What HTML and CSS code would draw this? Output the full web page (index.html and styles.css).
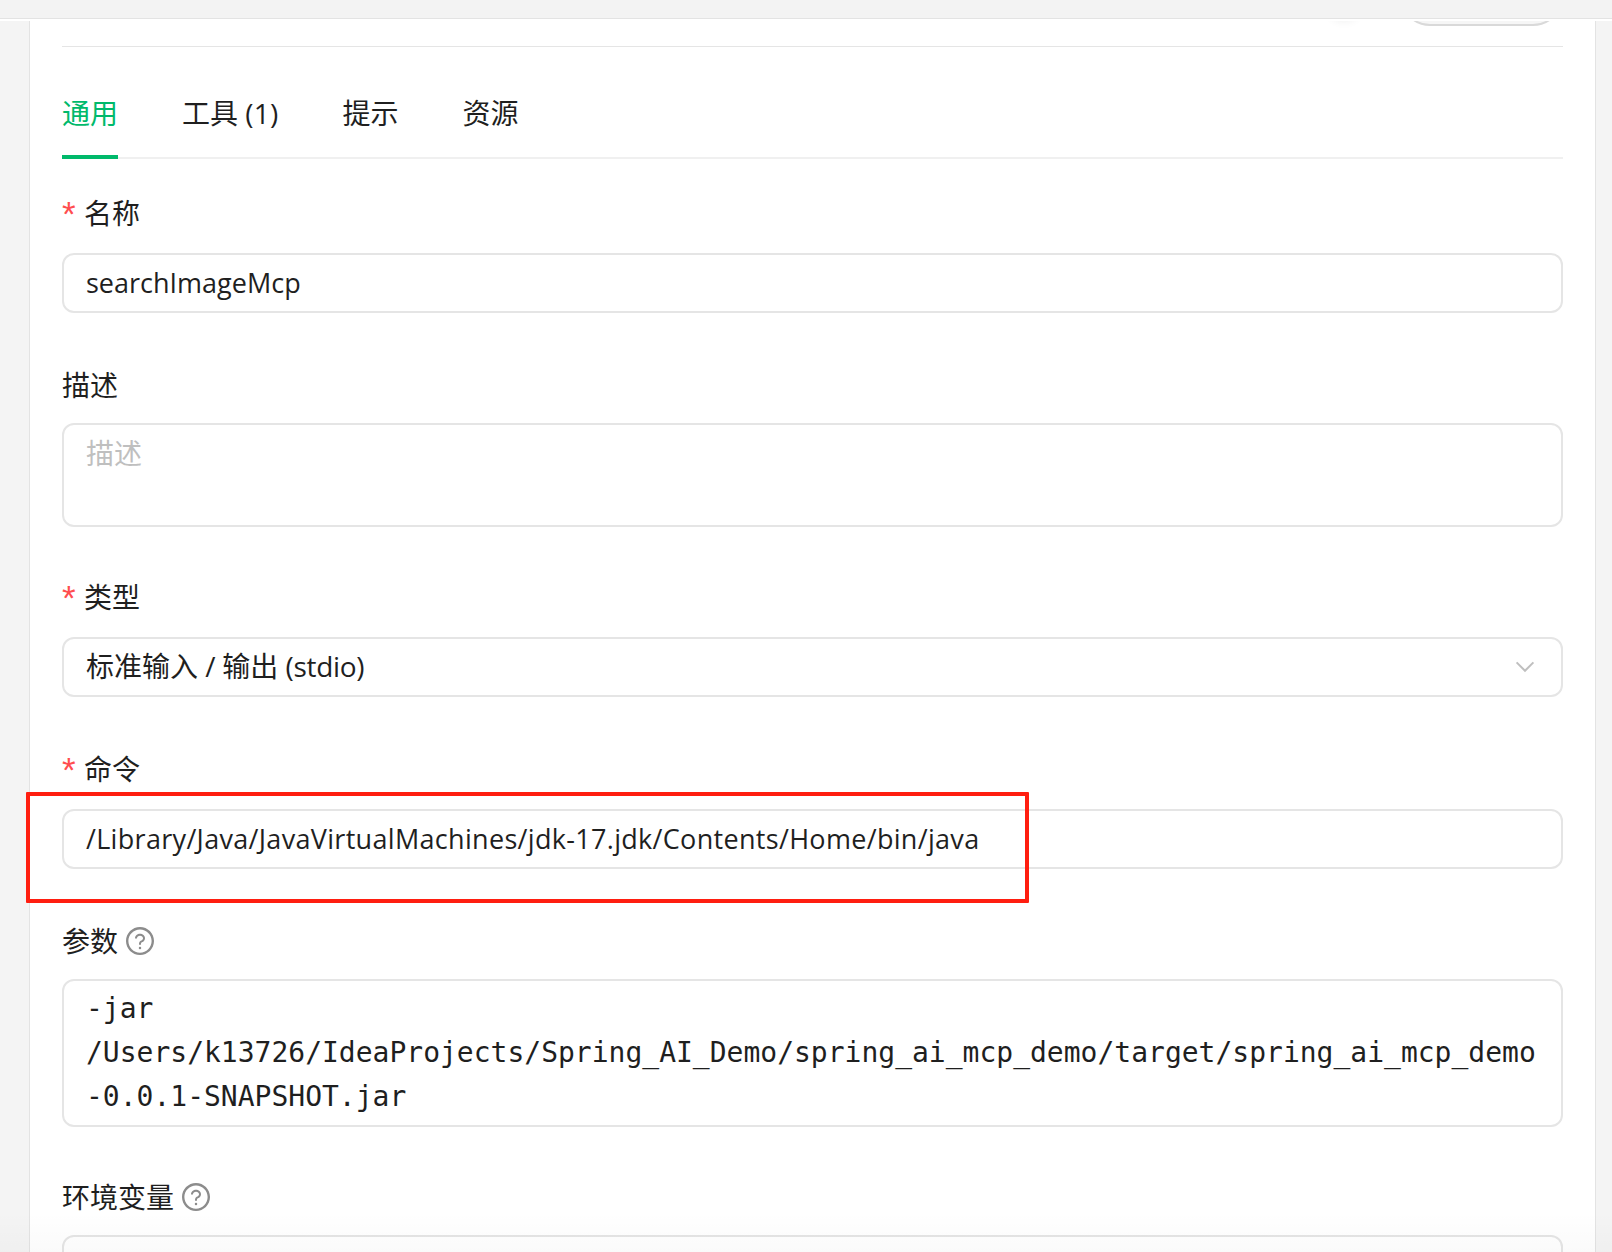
FILE: index.html
```html
<!DOCTYPE html>
<html lang="zh-CN">
<head>
    <meta charset="UTF-8">
    <meta name="viewport" content="width=device-width, initial-scale=1.0">
    <title>MCP 服务器</title>
    <link rel="stylesheet" href="styles.css">
</head>
<body>
    <div class="topbar"></div>
    <div class="page">
        <div class="card">
            <div class="card-header">
                <span class="switch"></span>
                <button class="save-btn" type="button"></button>
            </div>

            <div class="tabs">
                <div class="tab active">通用</div>
                <div class="tab">工具 <span class="count">(1)</span></div>
                <div class="tab">提示</div>
                <div class="tab">资源</div>
            </div>

            <div class="field">
                <div class="label"><span class="required">*</span>名称</div>
                <div class="control">
                    <div class="input"><span class="name-value">searchImageMcp</span></div>
                </div>
            </div>

            <div class="field">
                <div class="label">描述</div>
                <div class="textarea rows-2 placeholder">描述</div>
            </div>

            <div class="field">
                <div class="label"><span class="required">*</span>类型</div>
                <div class="control">
                    <div class="input select">
                        <span>标准输入 <span class="latin">/ </span>输出 <span class="latin">(stdio)</span></span>
                        <svg class="arrow" width="20" height="12" viewBox="0 0 20 12"><path d="M1.6 1.4 10 9.8l8.4-8.4" fill="none" stroke="#bfbfbf" stroke-width="2"/></svg>
                    </div>
                </div>
            </div>

            <div class="field marked">
                <div class="label"><span class="required">*</span>命令</div>
                <div class="control">
                    <div class="input"><span class="command-value">/Library/Java/JavaVirtualMachines/jdk-17.jdk/Contents/Home/bin/java</span></div>
                </div>
                <div class="mark"></div>
            </div>

            <div class="field">
                <div class="label">参数
                    <svg class="help" viewBox="64 64 896 896"><path d="M512 64C264.6 64 64 264.6 64 512s200.6 448 448 448 448-200.6 448-448S759.4 64 512 64zm0 820c-205.4 0-372-166.6-372-372s166.6-372 372-372 372 166.6 372 372-166.6 372-372 372z"/><path d="M623.6 316.7C593.6 290.4 554 276 512 276s-81.6 14.5-111.6 40.7C369.2 344 352 380.7 352 420v7.6c0 4.4 3.6 8 8 8h48c4.4 0 8-3.6 8-8V420c0-44.1 43.1-80 96-80s96 35.9 96 80c0 31.1-22 59.6-56.1 72.7-21.2 8.1-39.2 22.3-52.1 40.9-13.1 19-19.9 41.8-19.9 64.9V620c0 4.4 3.6 8 8 8h48c4.4 0 8-3.6 8-8v-22.7a48.3 48.3 0 0130.9-44.8c59-22.7 97.1-74.7 97.1-132.5.1-39.3-17.1-76-48.3-103.3zM472 732a40 40 0 1080 0 40 40 0 10-80 0z"/></svg>
                </div>
                <div class="textarea mono">-jar<br>/Users/k13726/IdeaProjects/Spring_AI_Demo/spring_ai_mcp_demo/target/spring_ai_mcp_demo<br>-0.0.1-SNAPSHOT.jar</div>
            </div>

            <div class="field">
                <div class="label">环境变量
                    <svg class="help" viewBox="64 64 896 896"><path d="M512 64C264.6 64 64 264.6 64 512s200.6 448 448 448 448-200.6 448-448S759.4 64 512 64zm0 820c-205.4 0-372-166.6-372-372s166.6-372 372-372 372 166.6 372 372-166.6 372-372 372z"/><path d="M623.6 316.7C593.6 290.4 554 276 512 276s-81.6 14.5-111.6 40.7C369.2 344 352 380.7 352 420v7.6c0 4.4 3.6 8 8 8h48c4.4 0 8-3.6 8-8V420c0-44.1 43.1-80 96-80s96 35.9 96 80c0 31.1-22 59.6-56.1 72.7-21.2 8.1-39.2 22.3-52.1 40.9-13.1 19-19.9 41.8-19.9 64.9V620c0 4.4 3.6 8 8 8h48c4.4 0 8-3.6 8-8v-22.7a48.3 48.3 0 0130.9-44.8c59-22.7 97.1-74.7 97.1-132.5.1-39.3-17.1-76-48.3-103.3zM472 732a40 40 0 1080 0 40 40 0 10-80 0z"/></svg>
                </div>
                <div class="textarea mono"></div>
            </div>
        </div>
    </div>
    <div class="bottom-fade"></div>
</body>
</html>
```
FILE: styles.css
```css
* {
    box-sizing: border-box;
}

body {
    margin: 0;
    height: 100vh;
    overflow: hidden;
    display: flex;
    flex-direction: column;
    background-color: #fff;
    color: #1f1f1f;
    font-family: "Open Sans", "Noto Sans CJK SC", sans-serif;
    font-size: 28px;
    line-height: 44px;
}

.topbar {
    flex: none;
    height: 19px;
    margin-bottom: 2px;
    background-color: #f3f3f3;
    border-bottom: 1px solid #e3e3e3;
}

.page {
    flex: 1;
    min-height: 0;
    overflow: hidden;
    padding: 0 16px 0 29px;
    background-color: #f4f4f4;
}

.card {
    padding: 0 32px;
    background-color: #fff;
    border-left: 1px solid #e3e3e3;
    border-right: 1px solid #e3e3e3;
}

/* scrolled header, only its bottom edge shows */
.card-header {
    display: flex;
    justify-content: flex-end;
    align-items: flex-end;
    height: 26px;
    padding-bottom: 20px;
    overflow: hidden;
    border-bottom: 1px solid #e5e5e5;
}

.switch {
    width: 36px;
    height: 36px;
    margin: 0 38px 8px 0;
    border-radius: 50%;
    box-shadow: 0 4px 8px rgba(0, 35, 11, 0.06);
}

.save-btn {
    flex: none;
    width: 163px;
    height: 60px;
    border: 2px solid #d9d9d9;
    border-radius: 30px;
    background-color: #f6f6f6;
}

.tabs {
    display: flex;
    gap: 64px;
    height: 92px;
    margin: 20px 0 32px;
    box-shadow: inset 0 -2px 0 #f0f0f0;
}

.tab {
    padding: 24px 0;
    white-space: nowrap;
}

.tab.active {
    color: #00b96b;
    border-bottom: 4px solid #00b96b;
}

.count {
    letter-spacing: 0.2px;
}

.latin {
    letter-spacing: -0.3px;
}

.field {
    margin-bottom: 48px;
}

.label {
    display: flex;
    align-items: center;
    height: 44px;
    margin-bottom: 16px;
}

.required {
    width: 14px;
    margin-right: 8px;
    padding-top: 2px;
    color: #ff4d4f;
    font-family: "Liberation Sans", sans-serif;
    font-size: 35px;
}

.help {
    width: 28px;
    height: 28px;
    margin-left: 8px;
    fill: #8c8c8c;
}

.control {
    padding: 2px 0;
}

.input {
    display: flex;
    align-items: center;
    height: 60px;
    padding: 0 22px;
    border: 2px solid #e5e5e5;
    border-radius: 12px;
    white-space: nowrap;
}

.name-value {
    font-size: 27px;
}

.command-value {
    font-size: 27px;
    letter-spacing: 0.31px;
}

.select {
    justify-content: space-between;
    padding: 0 26px 2px 22px;
}

.arrow {
    margin-top: 2px;
}

.textarea {
    min-height: 148px;
    padding: 6px 22px;
    border: 2px solid #e5e5e5;
    border-radius: 12px;
}

.rows-2 {
    min-height: 104px;
}

.placeholder {
    color: #bfbfbf;
}

.mono {
    font-family: "DejaVu Sans Mono", monospace;
    white-space: nowrap;
}

.marked {
    position: relative;
}

/* red frame drawn over the command */
.mark {
    position: absolute;
    left: -36px;
    top: 45px;
    width: 1003px;
    height: 111px;
    border: 4px solid #ff1e10;
    border-radius: 1px;
}

.bottom-fade {
    position: absolute;
    left: 0;
    right: 0;
    bottom: 0;
    height: 40px;
    background: linear-gradient(rgba(0, 0, 0, 0), rgba(0, 0, 0, 0.018));
}
```
